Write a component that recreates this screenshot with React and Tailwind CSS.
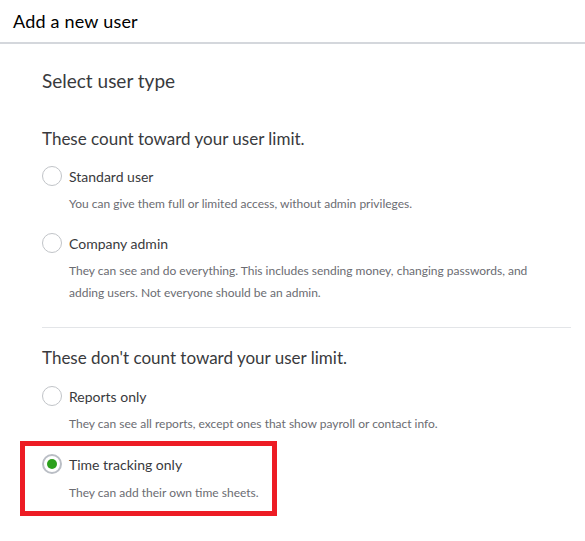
import React, { useState } from "react";

const Radio = ({ checked }) => (
    <span
        className={
            checked
                ? "w-[20px] h-[20px] rounded-full border-2 border-[#babec5] flex items-center justify-center shrink-0"
                : "w-[20px] h-[20px] rounded-full border border-[#c1c4c8] shrink-0"
        }
    >
        {checked && <span className="w-[10px] h-[10px] rounded-full bg-[#2ca01c]" />}
    </span>
);

const Option = ({ id, label, selected, onSelect, className = "" }) => (
    <button
        onClick={() => onSelect(id)}
        className={"h-[24px] flex items-center gap-[7px] text-[14px] text-[#393a3d] " + className}
    >
        <Radio checked={selected === id} />
        <span>{label}</span>
    </button>
);

const Desc = ({ children, className = "" }) => (
    <p className={"pl-[27px] text-[12px] leading-[22px] text-[#6b6c72] " + className}>{children}</p>
);

export default function App() {
    const [selected, setSelected] = useState("time");

    return (
        <div className="w-[585px] h-[541px] bg-white font-['Lato',sans-serif] overflow-hidden">
            <header className="h-[44px] border-b-2 border-[#d4d7dc] pl-[13px] flex items-center">
                <h1 className="text-[18px] tracking-[0.2px] text-[#000] leading-none">Add a new user</h1>
            </header>

            <div className="pl-[42px] pr-[14px]">
                <h2 className="mt-[25px] text-[19px] leading-[24px] text-[#393a3d]">Select user type</h2>

                <h3 className="mt-[34px] text-[17px] leading-[24px] text-[#393a3d]">These count toward your user limit.</h3>

                <Option id="standard" label="Standard user" selected={selected} onSelect={setSelected} className="mt-[13px]" />
                <Desc className="mt-[5px]">You can give them full or limited access, without admin privileges.</Desc>

                <Option id="admin" label="Company admin" selected={selected} onSelect={setSelected} className="mt-[16px]" />
                <Desc className="mt-[5px] pr-[10px]">
                    They can see and do everything. This includes sending money, changing passwords, and adding users. Not everyone should be an admin.
                </Desc>

                <div className="mt-[23px] border-t border-[#e3e5e8]" />

                <h3 className="mt-[18px] text-[17px] leading-[24px] text-[#393a3d]">These don't count toward your user limit.</h3>

                <Option id="reports" label="Reports only" selected={selected} onSelect={setSelected} className="mt-[14px]" />
                <Desc className="mt-[5px]">They can see all reports, except ones that show payroll or contact info.</Desc>

                {/* highlighted choice */}
                <div className="mt-[6px] -ml-[22px] w-[257px] border-[5px] border-[#ed1c24] pl-[17px] pt-[6px] pb-[7px]">
                    <Option id="time" label="Time tracking only" selected={selected} onSelect={setSelected} />
                    <Desc className="mt-[6px]">They can add their own time sheets.</Desc>
                </div>
            </div>
        </div>
    );
}
